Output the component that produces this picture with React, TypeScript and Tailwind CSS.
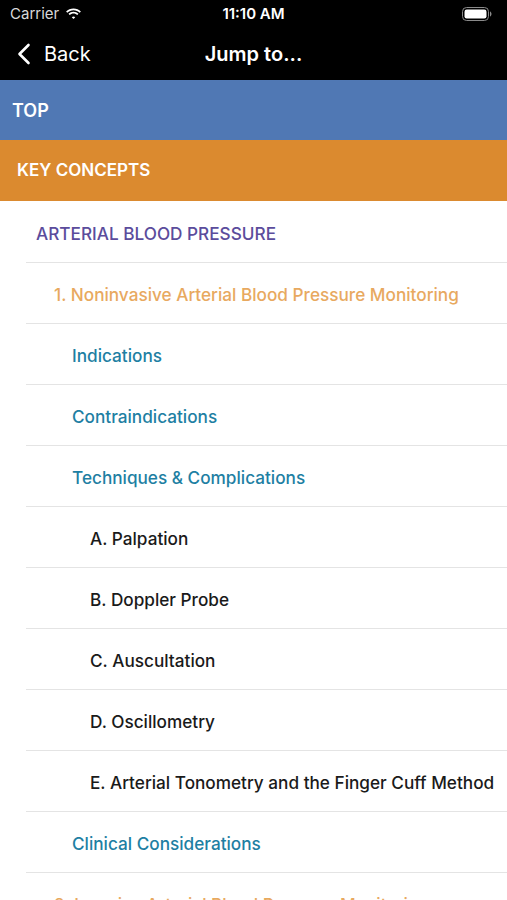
const font = { fontFamily: 'Inter, "Noto Sans", sans-serif' };

type Item = { label: string; level: number };

const items: Item[] = [
  { label: 'ARTERIAL BLOOD PRESSURE', level: 0 },
  { label: '1. Noninvasive Arterial Blood Pressure Monitoring', level: 1 },
  { label: 'Indications', level: 2 },
  { label: 'Contraindications', level: 2 },
  { label: 'Techniques & Complications', level: 2 },
  { label: 'A. Palpation', level: 3 },
  { label: 'B. Doppler Probe', level: 3 },
  { label: 'C. Auscultation', level: 3 },
  { label: 'D. Oscillometry', level: 3 },
  { label: 'E. Arterial Tonometry and the Finger Cuff Method', level: 3 },
  { label: 'Clinical Considerations', level: 2 },
  { label: '2. Invasive Arterial Blood Pressure Monitoring', level: 1 },
];

const levelClass = [
  'pl-[10px] text-[#5b4c9c]',
  'pl-[28px] text-[#e8a95f]',
  'pl-[46px] text-[#1e7fa3]',
  'pl-[64px] text-[#1a1a1a]',
];

function WifiIcon() {
  return (
    <svg width="17" height="12" viewBox="0 0 17 12" fill="white">
      <path d="M8.5 2.2c2.4 0 4.6.9 6.2 2.5l1.2-1.2C14 1.6 11.4.5 8.5.5S3 1.6 1.1 3.5l1.2 1.2C3.9 3.1 6.1 2.2 8.5 2.2z" />
      <path d="M8.5 5.5c1.5 0 2.8.6 3.8 1.5l1.2-1.2C12.2 4.5 10.4 3.8 8.5 3.8S4.8 4.5 3.5 5.8L4.7 7c1-.9 2.3-1.5 3.8-1.5z" />
      <path d="M8.5 8.6c.7 0 1.3.3 1.7.7L8.5 11 6.8 9.3c.4-.4 1-.7 1.7-.7z" />
    </svg>
  );
}

function BatteryIcon() {
  return (
    <svg width="30" height="14" viewBox="0 0 30 14">
      <rect x="0.5" y="0.5" width="26" height="13" rx="4" fill="none" stroke="#8a8a8a" strokeWidth="1" />
      <rect x="2.5" y="2.5" width="22" height="9" rx="2.2" fill="white" />
      <path d="M28 4.5v5c.9-.3 1.5-1.3 1.5-2.5s-.6-2.2-1.5-2.5z" fill="#8a8a8a" />
    </svg>
  );
}

function ChevronLeft() {
  return (
    <svg width="14" height="22" viewBox="0 0 14 22" fill="none" stroke="white" strokeWidth="2.6" strokeLinecap="round" strokeLinejoin="round">
      <path d="M11.5 2 2.5 11l9 9" />
    </svg>
  );
}

export default function App() {
  return (
    <div className="w-[507px] h-[900px] overflow-hidden bg-white flex flex-col" style={font}>
      {/* Status bar */}
      <div className="bg-black h-[28px] shrink-0 flex items-center justify-between px-[10px] text-white">
        <div className="flex items-center gap-[6px] w-[120px]">
          <span className="text-[15px] text-[#d9d9d9]">Carrier</span>
          <WifiIcon />
        </div>
        <span className="text-[15px] font-semibold">11:10 AM</span>
        <div className="w-[120px] flex justify-end pr-[5px]">
          <BatteryIcon />
        </div>
      </div>

      {/* Nav bar */}
      <div className="bg-black h-[52px] shrink-0 relative flex items-center text-white">
        <div className="flex items-center gap-[13px] pl-[17px]">
          <ChevronLeft />
          <span className="text-[20px] leading-none">Back</span>
        </div>
        <span className="absolute left-1/2 -translate-x-1/2 text-[20px] font-semibold leading-none">Jump to...</span>
      </div>

      {/* Sections */}
      <div className="h-[60px] shrink-0 bg-[#5078b4] flex items-center pl-[12px]">
        <span className="text-white text-[18px] font-semibold">TOP</span>
      </div>
      <div className="h-[61px] shrink-0 bg-[#db8a2f] flex items-center pl-[17px]">
        <span className="text-white text-[17px] font-semibold">KEY CONCEPTS</span>
      </div>

      <div className="ml-[26px] mt-[1px] flex flex-col">
        {items.map((it) => (
          <div
            key={it.label}
            className={`h-[61px] shrink-0 flex items-center pt-[3px] border-b border-[#e4e4e4] text-[17.2px] font-medium whitespace-nowrap ${levelClass[it.level]}`}
          >
            {it.label}
          </div>
        ))}
      </div>
    </div>
  );
}
